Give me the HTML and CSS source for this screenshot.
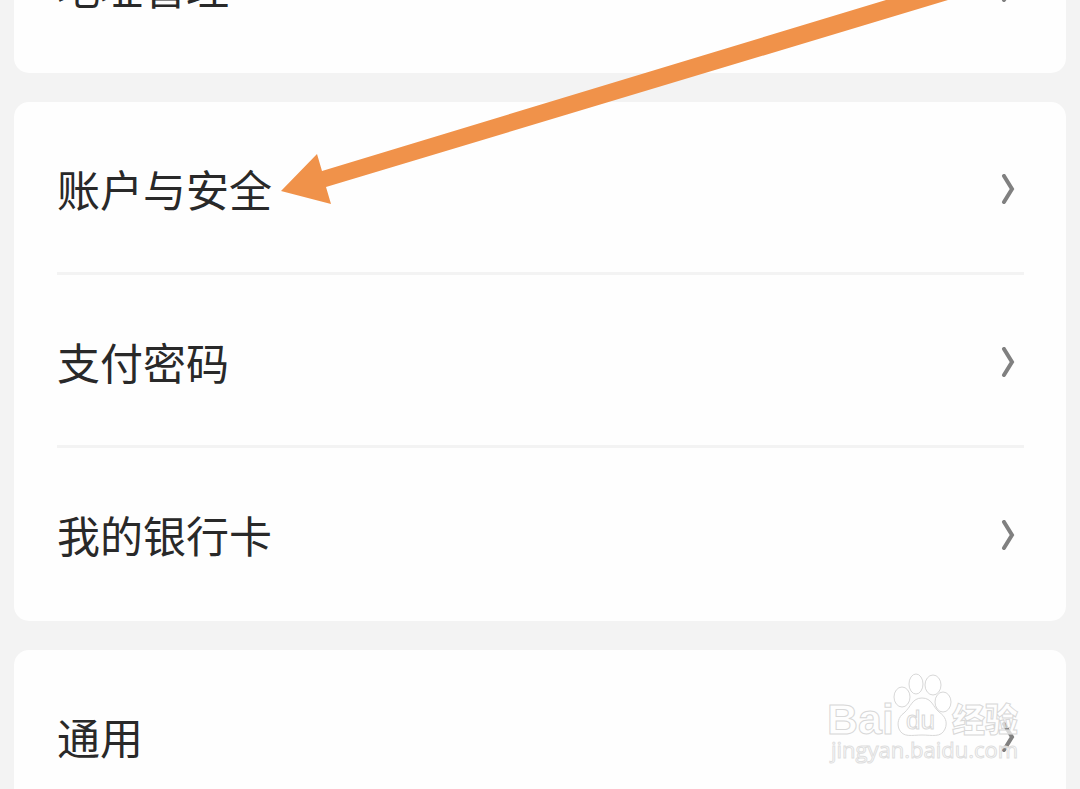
FILE: index.html
```html
<!DOCTYPE html>
<html lang="zh-CN">
<head>
<meta charset="utf-8">
<meta name="viewport" content="width=device-width, initial-scale=1">
<title>设置</title>
<link rel="stylesheet" href="styles.css">
</head>
<body>
<svg class="symbols" aria-hidden="true">
  <symbol id="chevron" viewBox="0 0 14 30"><path d="M3 2 L11 15 L3 28"/></symbol>
</svg>
<main class="settings">
  <section class="card card-scrolled">
    <a class="row" href="#address"><span class="label">地址管理</span><svg class="chevron" aria-hidden="true"><use href="#chevron"/></svg></a>
  </section>
  <section class="card">
    <a class="row" href="#security"><span class="label">账户与安全</span><svg class="chevron" aria-hidden="true"><use href="#chevron"/></svg></a>
    <a class="row" href="#password"><span class="label">支付密码</span><svg class="chevron" aria-hidden="true"><use href="#chevron"/></svg></a>
    <a class="row" href="#cards"><span class="label">我的银行卡</span><svg class="chevron" aria-hidden="true"><use href="#chevron"/></svg></a>
  </section>
  <section class="card card-last">
    <a class="row" href="#general"><span class="label">通用</span><svg class="chevron" aria-hidden="true"><use href="#chevron"/></svg></a>
  </section>
</main>
<svg class="arrow" viewBox="0 0 680 206" aria-hidden="true">
  <path d="M1 191 L37 154 L42 171 L606 0 L668 0 L46 187 L51 204 Z"/>
</svg>
<svg class="watermark" viewBox="0 0 200 100" role="img" aria-label="Baidu 经验">
  <g class="mark">
    <text class="brand" x="1" y="61">Bai</text>
    <ellipse cx="76" cy="24" rx="8" ry="10"/>
    <ellipse cx="90" cy="11" rx="7" ry="10"/>
    <ellipse cx="107" cy="12" rx="8" ry="10"/>
    <ellipse cx="117" cy="29" rx="8" ry="10"/>
    <path d="M96 25 C86 25 85 34 78 40 C72 44 71 51 73 56 C77 65 86 62 96 62 C106 62 115 65 119 56 C122 49 119 43 113 39 C107 34 106 25 96 25 Z"/>
    <text class="paw-text" x="80" y="56">du</text>
    <text class="brand-cn" x="126" y="59">经验</text>
    <text class="domain" x="5" y="85">jingyan.baidu.com</text>
  </g>
</svg>
</body>
</html>
```
FILE: styles.css
```css
* {
  box-sizing: border-box;
}

body {
  margin: 0;
  height: 100vh;
  overflow: hidden;
  position: relative;
  background: #f3f3f3;
  color: #292929;
  font-family: "Noto Sans CJK SC", sans-serif;
}

.symbols {
  position: absolute;
  width: 0;
  height: 0;
}

.settings {
  display: flex;
  flex-direction: column;
  gap: 29px;
  padding: 0 14px;
}

.card {
  padding: 0 42px 0 43px;
  border-radius: 15px;
  background: #fefefe;
}

/* The list is scrolled partway past its first row. */
.card-scrolled {
  margin-top: -100px;
}

.row {
  display: flex;
  align-items: center;
  justify-content: space-between;
  height: 173px;
  padding-top: 3px;
  border-bottom: 3px solid #f3f3f3;
  color: inherit;
  text-decoration: none;
}

.row:last-child {
  border-bottom-color: transparent;
}

.label {
  padding-bottom: 1px;
  font-size: 43px;
  line-height: 64px;
}

.chevron {
  width: 14px;
  height: 30px;
  margin-right: 9px;
  fill: none;
  stroke: #808080;
  stroke-width: 4;
  stroke-linecap: round;
}

.arrow {
  position: absolute;
  top: 0;
  left: 280px;
  width: 680px;
  height: 206px;
  fill: #f0924a;
}

.watermark {
  position: absolute;
  right: 54px;
  bottom: 16px;
  width: 200px;
  height: 100px;
}

.mark {
  fill: #ffffff;
  fill-opacity: 0.7;
  stroke: #d8d8d8;
  stroke-width: 1;
}

.brand {
  font: bold 43px "Liberation Sans", sans-serif;
}

.paw-text {
  font: 26px "Liberation Sans", sans-serif;
}

.brand-cn {
  font: 900 33px "Noto Sans CJK SC", sans-serif;
}

.domain {
  font: 22px "Open Sans", sans-serif;
  stroke: #dedede;
}
```
